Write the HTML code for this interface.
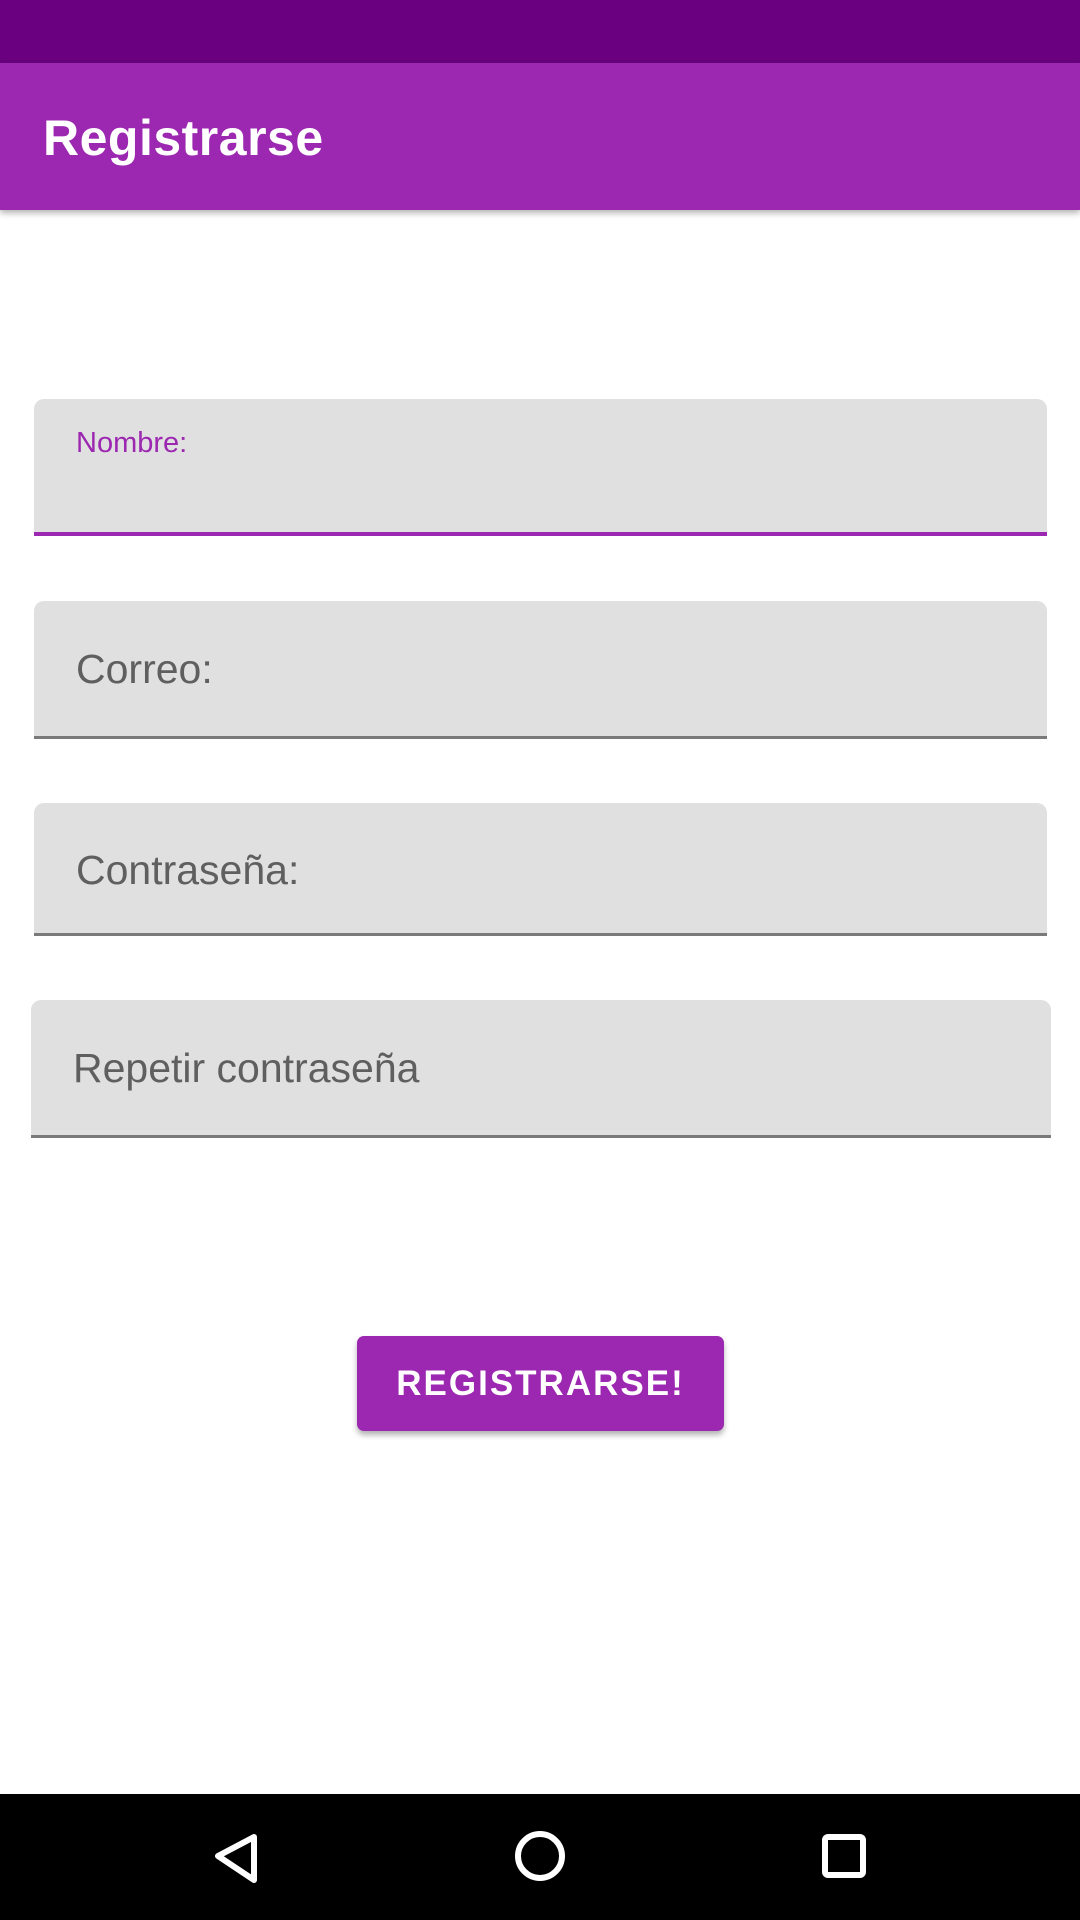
<!DOCTYPE html>
<html><head><meta charset="utf-8"><style>
*{margin:0;padding:0;box-sizing:border-box}
body{width:1080px;height:1920px;background:#fff;font-family:"Liberation Sans",sans-serif;position:relative;overflow:hidden}
.sb{position:absolute;left:0;top:0;width:1080px;height:63px;background:#6a0080}
.ab{position:absolute;left:0;top:63px;width:1080px;height:147px;background:#9c27b0;box-shadow:0 3px 6px rgba(0,0,0,.3)}
.ab span{position:absolute;left:43px;top:46px;color:#fff;font-size:50px;font-weight:bold;letter-spacing:0.5px}
.f{position:absolute;background:#e0e0e0;border-radius:10px 10px 0 0;border-bottom:3px solid #7a7a7a}
.f span{position:absolute;left:42px;color:#5f5f5f;font-size:41px}
.btn{position:absolute;left:357px;top:1336px;width:367px;height:95px;background:#9c27b0;border-radius:7px;box-shadow:0 4px 6px rgba(0,0,0,.3);color:#fff;font-size:35px;font-weight:bold;letter-spacing:2px;text-align:center;line-height:95px}
.nb{position:absolute;left:0;top:1794px;width:1080px;height:126px;background:#000}
</style></head><body>
<div class="sb"></div>
<div class="ab"><span>Registrarse</span></div>
<div class="f" style="left:34px;top:399px;width:1013px;height:137px;border-bottom:4px solid #9c27b0"><span style="top:28px;font-size:29px;color:#9c27b0">Nombre:</span></div>
<div class="f" style="left:34px;top:601px;width:1013px;height:138px"><span style="top:45px">Correo:</span></div>
<div class="f" style="left:34px;top:803px;width:1013px;height:133px"><span style="top:44px">Contraseña:</span></div>
<div class="f" style="left:31px;top:1000px;width:1020px;height:138px"><span style="top:45px">Repetir contraseña</span></div>
<div class="btn">REGISTRARSE!</div>
<div class="nb">
<svg width="1080" height="126" style="position:absolute;left:0;top:0">
<path d="M254 1837 L218 1856 L254 1880 Z" transform="translate(0,-1794)" fill="none" stroke="#fff" stroke-width="6" stroke-linejoin="round"/>
<circle cx="540" cy="62" r="22" fill="none" stroke="#fff" stroke-width="6"/>
<rect x="825" y="43" width="38" height="38" rx="3" fill="none" stroke="#fff" stroke-width="6"/>
</svg></div>
</body></html>
